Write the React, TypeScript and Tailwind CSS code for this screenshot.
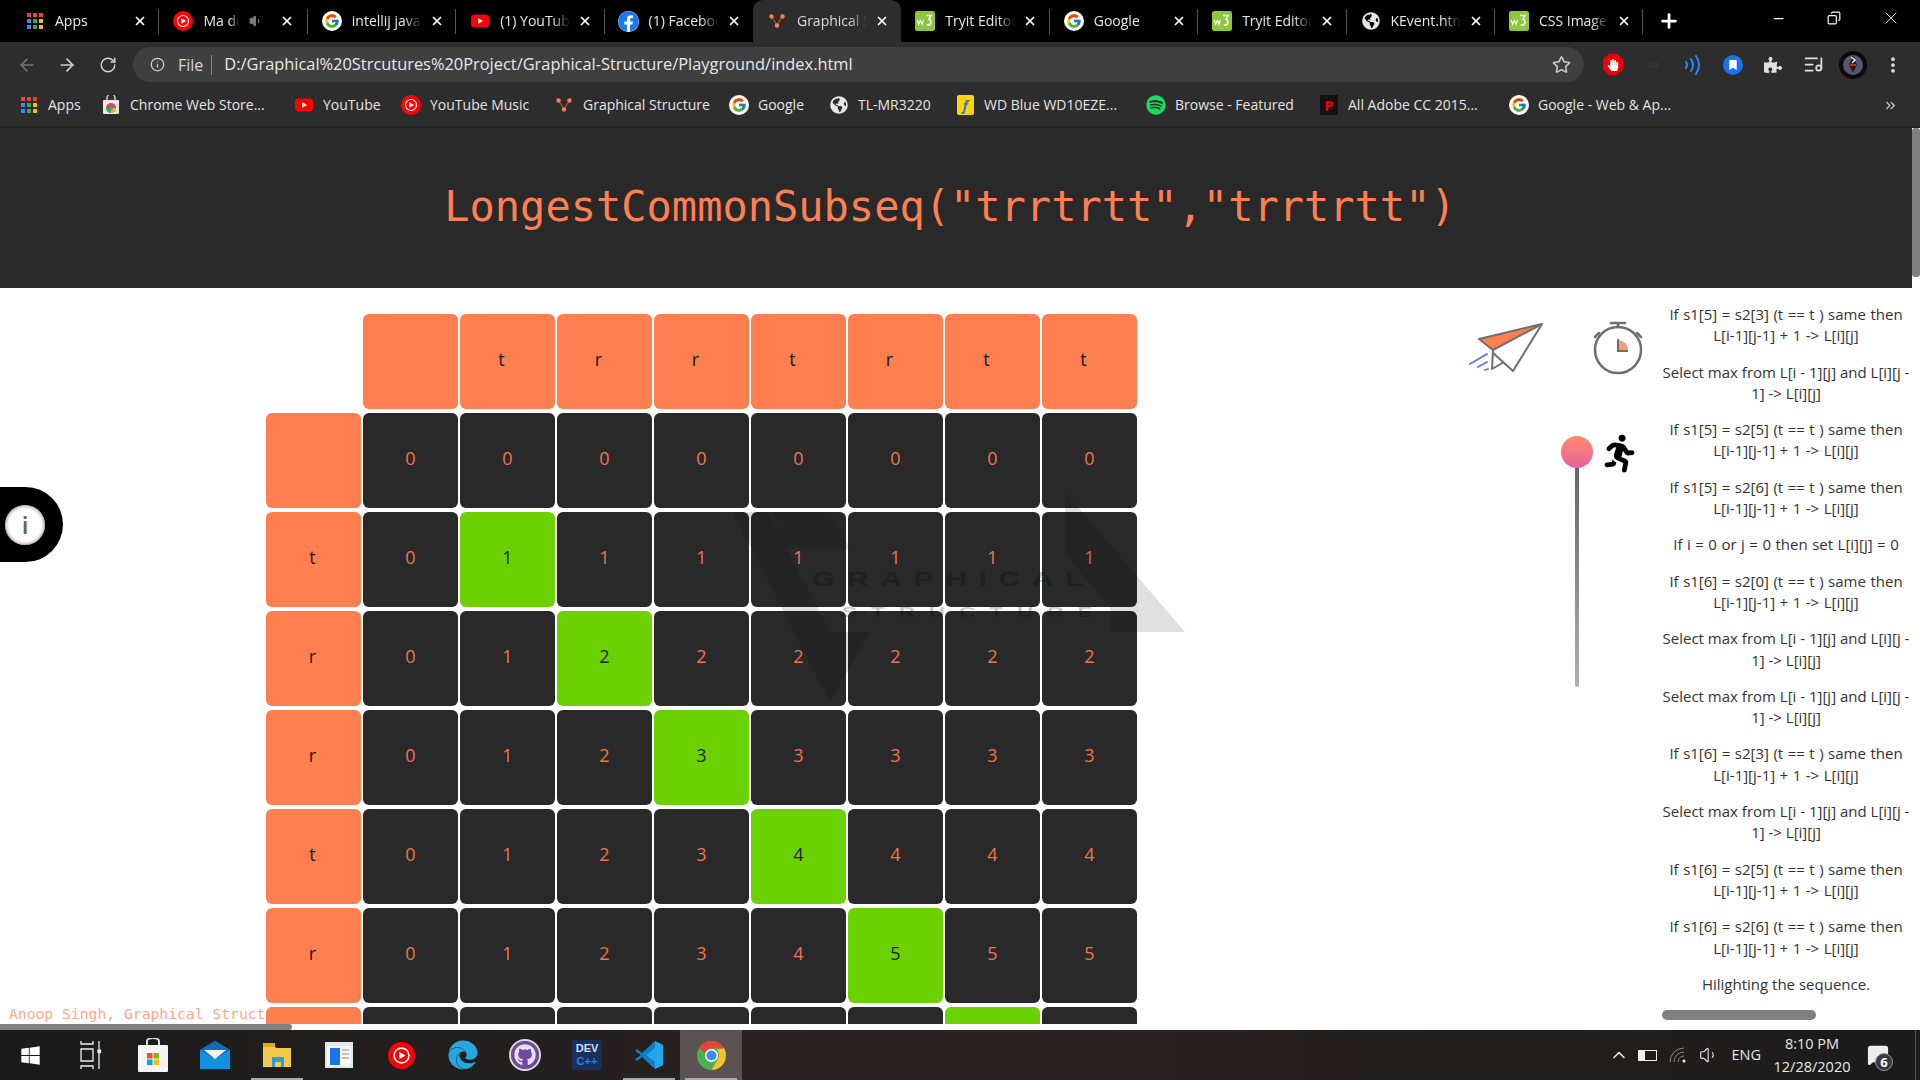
import React from "react";
import { FaRunning, FaWindows, FaGithub, FaSpotify, FaFacebook, FaGlobeAmericas, FaHandPaper, FaPuzzlePiece, FaBookmark, FaEdge, FaRegStar } from "react-icons/fa";
import { FcGoogle } from "react-icons/fc";
import { X, Plus, Minus, ArrowLeft, ArrowRight, RotateCw, Info, MoreVertical, ChevronUp, ChevronsRight, Volume1, ListMusic, Copy, MessageSquare } from "lucide-react";

const sans = "font-['Open_Sans','Noto_Sans',sans-serif]";

function AppsIcon({ size = 18 }: { size?: number }) {
  const colors = ["#ea4335", "#ea4335", "#ea4335", "#4285f4", "#34a853", "#fbbc04", "#4285f4", "#34a853", "#fbbc04"];
  return (
    <svg width={size} height={size} viewBox="0 0 18 18">
      {colors.map((c, i) => (
        <rect key={i} x={1 + (i % 3) * 6} y={1 + Math.floor(i / 3) * 6} width="4" height="4" fill={c} />
      ))}
    </svg>
  );
}
function YtMusic({ size = 20 }: { size?: number }) {
  return (
    <svg width={size} height={size} viewBox="0 0 20 20">
      <circle cx="10" cy="10" r="10" fill="#f00" />
      <circle cx="10" cy="10" r="5.5" fill="none" stroke="#fff" strokeWidth="1.2" />
      <path d="M8.3 7.2 13 10l-4.7 2.8z" fill="#fff" />
    </svg>
  );
}
function Yt({ size = 18 }: { size?: number }) {
  return (
    <svg width={size} height={size} viewBox="0 0 18 18">
      <rect x="0" y="2.5" width="18" height="13" rx="3.5" fill="#f00" />
      <path d="M7.2 6.2 12 9l-4.8 2.8z" fill="#fff" />
    </svg>
  );
}
function Gs({ size = 18 }: { size?: number }) {
  return (
    <svg width={size} height={size} viewBox="0 0 18 18">
      <path d="M4 5 9 13 14 5" fill="none" stroke="#9b5a42" strokeWidth="1.2" />
      <circle cx="3.5" cy="4.5" r="2.2" fill="#ff7f50" />
      <circle cx="14.5" cy="4.5" r="2.2" fill="#ff7f50" />
      <circle cx="9" cy="13.5" r="2.2" fill="#ff7f50" />
    </svg>
  );
}
function W3({ size = 18 }: { size?: number }) {
  return (
    <svg width={size} height={size} viewBox="0 0 18 18">
      <rect width="18" height="18" rx="2" fill="#8dc63f" />
      <path d="M2 8l1.3 4 1.5-3.5L6.3 12l1.3-4" fill="none" stroke="#fff" strokeWidth="1" />
      <path d="M10 4h4.5l-2 3.5c3 .5 2.5 6-2 5" fill="none" stroke="#fff" strokeWidth="1.3" />
    </svg>
  );
}
function Wrapped({ children }: { children: React.ReactNode }) {
  return <span className="flex h-[20px] w-[20px] items-center justify-center rounded-full bg-white">{children}</span>;
}
function G() {
  return <Wrapped><FcGoogle size={16} /></Wrapped>;
}
function Globe() {
  return <span className="flex h-[20px] w-[20px] items-center justify-center rounded-full"><FaGlobeAmericas size={18} className="text-[#e6e6e6]" /></span>;
}
function Fb() {
  return <span className="flex h-[21px] w-[21px] items-center justify-center rounded-full bg-white"><FaFacebook size={21} className="text-[#1877f2]" /></span>;
}
function ChromeLogo({ size = 40 }: { size?: number }) {
  return (
    <svg width={size} height={size} viewBox="0 0 40 40">
      <circle cx="20" cy="20" r="20" fill="#4caf50" />
      <path d="M20 0a20 20 0 0 1 17.3 10H20a10 10 0 0 0-9.5 6.9L3 9A20 20 0 0 1 20 0z" fill="#ea4335" />
      <path d="M37.3 10A20 20 0 0 1 20 40l8.700-15A10 10 0 0 0 27 12z" fill="#fbc02d" />
      <circle cx="20" cy="20" r="9" fill="#fff" />
      <circle cx="20" cy="20" r="7" fill="#4285f4" />
    </svg>
  );
}
function VsCode({ size = 30 }: { size?: number }) {
  return (
    <svg width={size} height={size} viewBox="0 0 30 30">
      <path d="M21 1 29 5v20l-8 4L8 17l-5 4-2-2 6-4-6-4 2-2 5 4z" fill="#0f7fc6" />
      <path d="M21 1 29 5v20l-8 4zM21 8 12 15l9 7z" fill="#25a5ea" fillRule="evenodd" />
    </svg>
  );
}

const tabs: { title: string; icon: React.ReactNode; active?: boolean; sound?: boolean }[] = [
  { title: "Apps", icon: <AppsIcon size={18} /> },
  { title: "Ma do", icon: <YtMusic size={20} />, sound: true },
  { title: "intellij java", icon: <G /> },
  { title: "(1) YouTube", icon: <Yt size={18} /> },
  { title: "(1) Facebook", icon: <Fb /> },
  { title: "Graphical Structure", icon: <Gs size={18} />, active: true },
  { title: "Tryit Editor", icon: <W3 size={20} /> },
  { title: "Google", icon: <G /> },
  { title: "Tryit Editor", icon: <W3 size={20} /> },
  { title: "KEvent.html", icon: <Globe /> },
  { title: "CSS Image", icon: <W3 size={20} /> },
];

function TabBar() {
  return (
    <div className={`flex h-[42px] shrink-0 items-stretch bg-black pl-[11px] text-[14px] ${sans}`}>
      {tabs.map((t, i) => (
        <div
          key={i}
          className={`relative flex w-[148.4px] shrink-0 items-center pl-[13px] ${t.active ? "rounded-t-[10px] bg-[#2d2d2d] text-[#dcdcdc]" : "text-[#e8e8e8]"}`}
        >
          <span className="flex w-[22px] shrink-0 justify-center">{t.icon}</span>
          <span className={`ml-[9px] overflow-hidden whitespace-nowrap pb-[1px] ${t.sound ? "mr-[0px] w-[36px]" : "mr-[5px] w-[70px]"} [mask-image:linear-gradient(to_right,black_75%,transparent)]`}>{t.title}</span>
          {t.sound && <Volume1 size={14} className="ml-[10px] mr-[14px] fill-[#777] text-[#777]" />}
          <X size={14} strokeWidth={3} className="ml-[3px] text-white" />
          {!t.active && i !== 4 && <span className="absolute right-0 top-[9px] h-[25px] w-px bg-[#555]" />}
        </div>
      ))}
      <div className="flex w-[52px] items-center justify-center"><Plus size={22} strokeWidth={3} className="text-white" /></div>
      <div className="ml-auto flex">
        <div className="flex w-[56px] items-center justify-center"><Minus size={15} className="-translate-y-[3px] text-white" /></div>
        <div className="flex w-[56px] items-center justify-center"><Copy size={14} className="-translate-y-[3px] -scale-x-100 text-white" /></div>
        <div className="flex w-[58px] items-center justify-center"><X size={20} strokeWidth={1} className="-translate-y-[3px] text-white" /></div>
      </div>
    </div>
  );
}

function Ic({ children }: { children: React.ReactNode }) {
  return <div className="flex h-[35px] w-[40px] items-center justify-center">{children}</div>;
}

function Toolbar() {
  return (
    <div className={`flex h-[42px] shrink-0 items-center bg-[#2d2d2d] pt-[3px] ${sans}`}>
      <div className="flex w-[133px] shrink-0 items-center pl-[17px]">
        <ArrowLeft size={20} className="text-[#737373]" />
        <ArrowRight size={20} className="ml-[20px] text-[#d0d0d0]" />
        <RotateCw size={18} className="ml-[22px] text-[#d0d0d0]" />
      </div>
      <div className="flex h-[35px] w-[1451px] shrink-0 items-center rounded-full bg-[#3f3f3f] pl-[17px] pr-[13px] text-[16px] text-[#e8e8e8]">
        <Info size={15} className="text-[#d0d0d0]" />
        <span className="ml-[13px] text-[#d8d8d8]">File</span>
        <span className="ml-[8px] h-[20px] w-px bg-[#8a8a8a]" />
        <span className="ml-[12px] w-[640px] whitespace-nowrap text-[16.4px]">D:/Graphical%20Strcutures%20Project/Graphical-Structure/Playground/index.html</span>
        <FaRegStar size={19} className="ml-auto text-[#c8c8c8]" />
      </div>
      <div className="ml-[9px] flex">
        <Ic><span className="flex h-[21px] w-[21px] items-center justify-center bg-[#e00] [clip-path:polygon(30%_0,70%_0,100%_30%,100%_70%,70%_100%,30%_100%,0_70%,0_30%)]"><FaHandPaper size={12} className="text-white" /></span></Ic>
        <Ic><span className="text-[9px] text-[#3d3d3d]">{"{≡}"}</span></Ic>
        <Ic>
          <svg width="18" height="20" viewBox="0 0 18 20" fill="none" stroke="#1a8cff" strokeWidth="2" strokeLinecap="round">
            <path d="M2 7q2 3 0 6" /><path d="M7 4q4 6 0 12" /><path d="M12 1q6 9 0 18" />
          </svg>
        </Ic>
        <Ic><span className="flex h-[20px] w-[20px] items-center justify-center rounded-full bg-[#1a73e8]"><FaBookmark size={10} className="text-white" /></span></Ic>
        <Ic><FaPuzzlePiece size={18} className="text-[#e0e0e0]" /></Ic>
        <Ic><ListMusic size={21} className="text-[#e0e0e0]" /></Ic>
        <Ic>
          <svg width="28" height="28" viewBox="0 0 28 28">
            <circle cx="14" cy="14" r="14" fill="#0a0a0a" />
            <circle cx="14" cy="14" r="10" fill="#5a5670" />
            <path d="M14 4 10 14l4 8 4-8z" fill="#1c1a26" />
            <path d="M12 6l4 3-3 3" fill="none" stroke="#e6e6e6" strokeWidth="1.5" />
            <path d="M11 14h6" stroke="#d02828" strokeWidth="2" />
          </svg>
        </Ic>
        <Ic><MoreVertical size={20} strokeWidth={2.5} className="text-[#e0e0e0]" /></Ic>
      </div>
    </div>
  );
}

const marks: { label: string; icon: React.ReactNode; w: string }[] = [
  { label: "Apps", icon: <AppsIcon size={18} />, w: "w-[82px]" },
  {
    label: "Chrome Web Store...",
    icon: (
      <svg width="18" height="20" viewBox="0 0 18 20">
        <path d="M5 6V3a4 4 0 0 1 8 0v3" fill="none" stroke="#ccc" strokeWidth="1.5" />
        <rect x="1" y="5" width="16" height="14" rx="1" fill="#e8e8e8" />
        <circle cx="9" cy="13" r="5" fill="#ea4335" />
        <path d="M9 13 4 13a5 5 0 0 0 5 5z" fill="#34a853" />
        <path d="M9 13 14 13a5 5 0 0 1-5 5z" fill="#fbbc04" />
        <circle cx="9" cy="13" r="2" fill="#4285f4" />
      </svg>
    ),
    w: "w-[193px]",
  },
  { label: "YouTube", icon: <Yt size={18} />, w: "w-[107px]" },
  { label: "YouTube Music", icon: <YtMusic size={20} />, w: "w-[153px]" },
  { label: "Graphical Structure", icon: <Gs size={18} />, w: "w-[175px]" },
  { label: "Google", icon: <G />, w: "w-[100px]" },
  { label: "TL-MR3220", icon: <Globe />, w: "w-[126px]" },
  {
    label: "WD Blue WD10EZE...",
    icon: <span className={`flex h-[20px] w-[17px] items-center justify-center rounded-[2px] bg-[#ffd400] text-[14px] font-bold italic text-[#2874f0] ${sans}`}>f</span>,
    w: "w-[191px]",
  },
  { label: "Browse - Featured", icon: <FaSpotify size={20} className="text-[#1ed760]" />, w: "w-[173px]" },
  { label: "All Adobe CC 2015...", icon: <span className="flex h-[20px] w-[18px] items-center justify-center bg-[#111] text-[15px] font-bold leading-none text-[#e00]">P</span>, w: "w-[190px]" },
  { label: "Google - Web & Ap...", icon: <G />, w: "w-[200px]" },
];

function Bookmarks() {
  return (
    <div className={`flex h-[43px] shrink-0 items-center border-b border-[#222] bg-[#2d2d2d] pl-[19px] text-[14px] text-[#e4e4e4] ${sans}`}>
      {marks.map((m) => (
        <div key={m.label} className={`flex ${m.w} shrink-0 items-center`}>
          <span className="flex w-[20px] shrink-0 justify-center">{m.icon}</span>
          <span className="ml-[9px] whitespace-nowrap pb-[1px]">{m.label}</span>
        </div>
      ))}
      <ChevronsRight size={15} className="ml-auto mr-[22px] text-[#d0d0d0]" />
    </div>
  );
}

const rowLabels = ["", "t", "r", "r", "t", "r", "t", "t"];
const colLabels = ["", "t", "r", "r", "t", "r", "t", "t"];
const values = [
  [0, 0, 0, 0, 0, 0, 0, 0],
  [0, 1, 1, 1, 1, 1, 1, 1],
  [0, 1, 2, 2, 2, 2, 2, 2],
  [0, 1, 2, 3, 3, 3, 3, 3],
  [0, 1, 2, 3, 4, 4, 4, 4],
  [0, 1, 2, 3, 4, 5, 5, 5],
  [0, 1, 2, 3, 4, 5, 6, 6],
  [0, 1, 2, 3, 4, 5, 6, 7],
];

function Cell({ kind, pad = "", children }: { kind: "head" | "dark" | "green" | "empty"; pad?: string; children?: React.ReactNode }) {
  const tone = {
    head: "bg-[#ff7f50] text-[#1a1a1a]",
    dark: "bg-[#292929] text-[#f0754a]",
    green: "bg-[#6bd100] text-[#242424]",
    empty: "bg-transparent",
  }[kind];
  return <div className={`flex h-[95px] w-[95px] items-center justify-center rounded-[6px] pb-[5px] text-[18px] ${pad} ${tone}`}>{children}</div>;
}

function Board() {
  return (
    <div className={`relative z-10 grid w-fit grid-cols-[repeat(9,95px)] gap-x-[2px] gap-y-[4px] ${sans}`}>
      <Cell kind="empty" />
      {colLabels.map((c, i) => <Cell key={i} kind="head" pad="pr-[12px]">{c}</Cell>)}
      {values.map((row, r) => (
        <React.Fragment key={r}>
          <Cell kind="head" pad="pr-[2px]">{rowLabels[r]}</Cell>
          {row.map((v, c) => (
            <Cell key={c} kind={r > 0 && r === c ? "green" : "dark"}>{v}</Cell>
          ))}
        </React.Fragment>
      ))}
    </div>
  );
}

function Watermark() {
  return (
    <svg className="pointer-events-none absolute left-[720px] top-[359px] z-20" width="480" height="230" viewBox="720 488 480 230">
      <g fill="#000" fillOpacity="0.12">
        <polygon points="1065,493 1185,633 1110,633 1110,608 1065,555" />
        <polygon points="733,513 830,703 870,633 830,633 768,513" />
        <polygon points="830,513 851,550 786,550 771,513" fillOpacity="0.08" />
      </g>
      <g fill="#000" fillOpacity="0.22" fontFamily="'Liberation Sans',sans-serif" fontWeight="700">
        <text transform="scale(1.5,1)" x="541.3" y="587" textLength="181" lengthAdjust="spacing" fontSize="20">GRAPHICAL</text>
        <text transform="scale(1.5,1)" x="561.3" y="618" textLength="167" lengthAdjust="spacing" fontSize="15">STRUCTURE</text>
      </g>
    </svg>
  );
}

function Tools() {
  return (
    <div className="flex w-[192px] shrink-0 flex-col pt-[33px]">
      <div className="flex items-start">
        <svg className="ml-[1px] mt-[2px]" width="76" height="52" viewBox="0 0 76 52" fill="none">
          <path d="M10 16 73 1 24 27z" fill="#ff7f50" stroke="#6e6e6e" strokeWidth="2" strokeLinejoin="round" />
          <path d="M73 1 44 48 24 30" stroke="#6e6e6e" strokeWidth="2" strokeLinejoin="round" />
          <path d="M24 27 23 46 35 39" stroke="#6e6e6e" strokeWidth="2" strokeLinejoin="round" />
          <path d="M1 41 18 31M9 44 18 39M16 47 19 46" stroke="#6b6bff" strokeWidth="1.8" strokeLinecap="round" />
        </svg>
        <svg className="ml-[48px]" width="50" height="54" viewBox="0 0 50 54" fill="none">
          <circle cx="25" cy="29" r="23" stroke="#6e6e6e" strokeWidth="2.5" />
          <path d="M18 2h14M25 2v4M6 12l-4 4M44 12l4 4" stroke="#6e6e6e" strokeWidth="2.5" strokeLinecap="round" />
          <path d="M25 19a10 10 0 0 1 10 10H25z" fill="#ff9a78" />
          <path d="M25 18v12h10" stroke="#6e6e6e" strokeWidth="2" />
        </svg>
      </div>
      <div className="mt-[61px] flex items-start">
        <div className="ml-[93px] flex w-[32px] flex-col items-center">
          <div className="h-[32px] w-[32px] rounded-full bg-gradient-to-b from-[#ff8a6a] to-[#e8609f]" />
          <div className="h-[219px] w-[4px] rounded-b-[2px] bg-gradient-to-b from-[#666] to-[#b0b0b0]" />
        </div>
        <FaRunning size={38} className="ml-[7px] -mt-[1px] -rotate-6 text-black" />
      </div>
    </div>
  );
}

const steps: string[][] = [
  ["If s1[5] = s2[3] (t == t ) same then", "L[i-1][j-1] + 1 -> L[i][j]"],
  ["Select max from L[i - 1][j] and L[i][j -", "1] -> L[i][j]"],
  ["If s1[5] = s2[5] (t == t ) same then", "L[i-1][j-1] + 1 -> L[i][j]"],
  ["If s1[5] = s2[6] (t == t ) same then", "L[i-1][j-1] + 1 -> L[i][j]"],
  ["If i = 0 or j = 0 then set L[i][j] = 0"],
  ["If s1[6] = s2[0] (t == t ) same then", "L[i-1][j-1] + 1 -> L[i][j]"],
  ["Select max from L[i - 1][j] and L[i][j -", "1] -> L[i][j]"],
  ["Select max from L[i - 1][j] and L[i][j -", "1] -> L[i][j]"],
  ["If s1[6] = s2[3] (t == t ) same then", "L[i-1][j-1] + 1 -> L[i][j]"],
  ["Select max from L[i - 1][j] and L[i][j -", "1] -> L[i][j]"],
  ["If s1[6] = s2[5] (t == t ) same then", "L[i-1][j-1] + 1 -> L[i][j]"],
  ["If s1[6] = s2[6] (t == t ) same then", "L[i-1][j-1] + 1 -> L[i][j]"],
  ["Hilighting the sequence."],
];

function StepLog() {
  return (
    <div className={`flex w-[252px] shrink-0 flex-col pt-[16px] ${sans}`}>
      <div className="flex h-[706px] flex-col gap-[15px] overflow-hidden text-center text-[15px] leading-[21.3px] text-[#333]">
        {steps.map((s, i) => (
          <p key={i} className={`whitespace-nowrap ${s[0].startsWith("If") ? "[word-spacing:0.6px]" : ""}`}>
            {s.map((l, j) => <span key={j} className="block">{l}</span>)}
          </p>
        ))}
      </div>
      <div className="ml-[2px] h-[10px] w-[154px] rounded-full bg-[#808080]" />
    </div>
  );
}

function Main() {
  return (
    <div className="relative flex min-h-0 flex-1 flex-col bg-white">
      <div className="flex">
        <div className="w-[1912px] shrink-0">
          <div className="flex h-[160px] items-center justify-center bg-[#292929] pb-[3px] pr-[12px] text-[42px] leading-none text-[#ff7f50] font-['DejaVu_Sans_Mono','Liberation_Mono',monospace]">
            LongestCommonSubseq("trrtrtt","trrtrtt")
          </div>
        </div>
        <div className="w-[8px] shrink-0 bg-white">
          <div className="h-[149px] w-[8px] rounded-[3px] bg-[#808080]" />
        </div>
      </div>
      <div className="flex h-[736px] w-[1912px] overflow-hidden">
        <div className="w-[1468px] shrink-0 pl-[266px] pt-[26px]">
          <Board />
        </div>
        <Tools />
        <StepLog />
      </div>
      <div className="h-[6px] shrink-0">
        <div className="h-[6px] w-[292px] rounded-r-[3px] bg-[#808080]" />
      </div>
      <div className="absolute bottom-[6px] left-[9px] whitespace-nowrap text-[14.7px] leading-[20px] text-[#ffa78c] font-['DejaVu_Sans_Mono','Liberation_Mono',monospace]">
        Anoop Singh, Graphical Structures
      </div>
      <Watermark />
      <div className="absolute left-0 top-[359px] z-30 flex h-[75px] w-[63px] items-center rounded-r-[38px] bg-black pl-[5px]">
        <div className="flex h-[40px] w-[40px] items-center justify-center rounded-full bg-white shadow-[inset_0_0_4px_#667]">
          <span className={`text-[24px] font-semibold leading-none text-[#5c6070] ${sans}`}>i</span>
        </div>
      </div>
    </div>
  );
}

const taskIcons: { node: React.ReactNode; bar?: boolean; active?: boolean; first?: boolean }[] = [
  { node: <FaWindows size={21} className="text-white" />, first: true },
  {
    node: (
      <svg width="22" height="30" viewBox="0 0 22 30" fill="none" stroke="#eee" strokeWidth="1.3">
        <path d="M1 1v3h12V1M1 9h12v12H1zM1 29v-3h12v3M19 1v8M19 13v16" /><rect x="18" y="10" width="2.5" height="2.5" fill="#eee" />
      </svg>
    ),
  },
  {
    node: (
      <svg width="30" height="34" viewBox="0 0 30 34">
        <path d="M9 8V3a6 3 0 0 1 12 0v5" fill="none" stroke="#ddd" strokeWidth="2" />
        <rect x="0" y="7" width="30" height="27" rx="1" fill="#f5f5f5" />
        <rect x="9" y="15" width="5.5" height="5.5" fill="#f25022" /><rect x="15.5" y="15" width="5.5" height="5.5" fill="#7fba00" />
        <rect x="9" y="21.5" width="5.5" height="5.5" fill="#00a4ef" /><rect x="15.5" y="21.5" width="5.5" height="5.5" fill="#ffb900" />
      </svg>
    ),
  },
  {
    node: (
      <svg width="30" height="28" viewBox="0 0 30 28">
        <path d="M0 9 15 0l15 9v19H0z" fill="#1490df" /><path d="M0 9 15 0l15 9-15 9z" fill="#0f6cbd" />
        <path d="M4 9h22l-11 9z" fill="#f2f2f2" />
      </svg>
    ),
  },
  {
    node: (
      <svg width="28" height="24" viewBox="0 0 28 24">
        <path d="M0 2h11l2 3h15v19H0z" fill="#f2c94c" /><rect x="0" y="0" width="12" height="4" fill="#e0a81a" />
        <rect x="9" y="14" width="12" height="10" fill="#2d9cdb" /><rect x="12" y="19" width="6" height="5" fill="#f2c94c" />
      </svg>
    ),
    bar: true,
  },
  {
    node: (
      <svg width="28" height="26" viewBox="0 0 28 26">
        <rect width="28" height="26" fill="#dfe7ee" /><rect x="2" y="4" width="24" height="20" fill="#f8f8f8" />
        <rect x="5" y="6" width="10" height="17" fill="#1a73e8" /><path d="M17 8h7M17 12h7M17 16h7" stroke="#888" />
      </svg>
    ),
  },
  { node: <YtMusic size={27} /> },
  { node: <FaEdge size={30} className="text-[#28a8e0]" /> },
  {
    node: (
      <span className="flex h-[28px] w-[28px] items-center justify-center rounded-full bg-[#6e4a9e] outline-2 outline-[#ddd]">
        <FaGithub size={22} className="text-[#e8e0f0]" />
      </span>
    ),
  },
  {
    node: (
      <span className="flex h-[30px] w-[30px] flex-col items-center justify-center rounded-[3px] bg-[#17305e] font-['Liberation_Sans',sans-serif] text-[11px] font-bold leading-[13px]">
        <span className="text-[#cfe0ff]">DEV</span>
        <span className="text-[#2e7de0]">C++</span>
      </span>
    ),
  },
  { node: <VsCode size={30} />, bar: true },
  { node: <ChromeLogo size={29} />, active: true },
];

function Taskbar() {
  return (
    <div className={`flex h-[50px] shrink-0 items-stretch bg-gradient-to-r from-[#1b1b1b] via-[#2b2321] to-[#1b1b1b] ${sans}`}>
      {taskIcons.map((t, i) => (
        <div key={i} className={`relative flex items-center justify-center ${t.first ? "w-[60px]" : "w-[62px]"} ${t.active ? "bg-[#5a5352]" : ""}`}>
          {t.node}
          {(t.bar || t.active) && <span className="absolute bottom-0 left-[5px] right-[5px] h-[2px] bg-[#aaa]" />}
        </div>
      ))}
      <div className="ml-auto flex items-center text-[#e8e8e8]">
        <ChevronUp size={20} className="mr-[9px]" />
        <span className="relative mr-[12px] h-[11px] w-[19px] border border-[#eee] after:absolute after:inset-y-0 after:left-0 after:w-[6px] after:bg-[#eee]" />
        <svg width="20" height="16" viewBox="0 0 20 16" fill="none" stroke="#888" strokeWidth="1" className="mr-[10px]">
          <path d="M1 15A14 14 0 0 1 15 1M5 15A10 10 0 0 1 15 5M9 15a6 6 0 0 1 6-6" /><circle cx="15" cy="14" r="1.5" fill="#eee" stroke="none" />
        </svg>
        <Volume1 size={20} strokeWidth={1.3} className="mr-[12px]" />
        <span className="mr-[12px] text-[14.5px]">ENG</span>
        <div className="mr-[15px] flex w-[78px] flex-col items-center text-[14.5px] leading-[23px]">
          <span>8:10 PM</span>
          <span>12/28/2020</span>
        </div>
        <div className="relative mr-[25px] flex w-[24px] justify-center">
          <MessageSquare size={22} className="fill-[#eee] text-[#eee]" />
          <span className="absolute -bottom-[5px] -right-[3px] flex h-[18px] w-[18px] items-center justify-center rounded-full border border-[#999] bg-[#3a3a3a] text-[13px] font-bold leading-none text-white">6</span>
        </div>
        <span className="h-full w-px bg-[#555]" />
        <span className="w-[4px]" />
      </div>
    </div>
  );
}

export default function App() {
  return (
    <div className="flex h-[1080px] w-[1920px] flex-col overflow-hidden bg-white">
      <TabBar />
      <Toolbar />
      <Bookmarks />
      <div className="h-px shrink-0 bg-[#222]" />
      <Main />
      <Taskbar />
    </div>
  );
}
